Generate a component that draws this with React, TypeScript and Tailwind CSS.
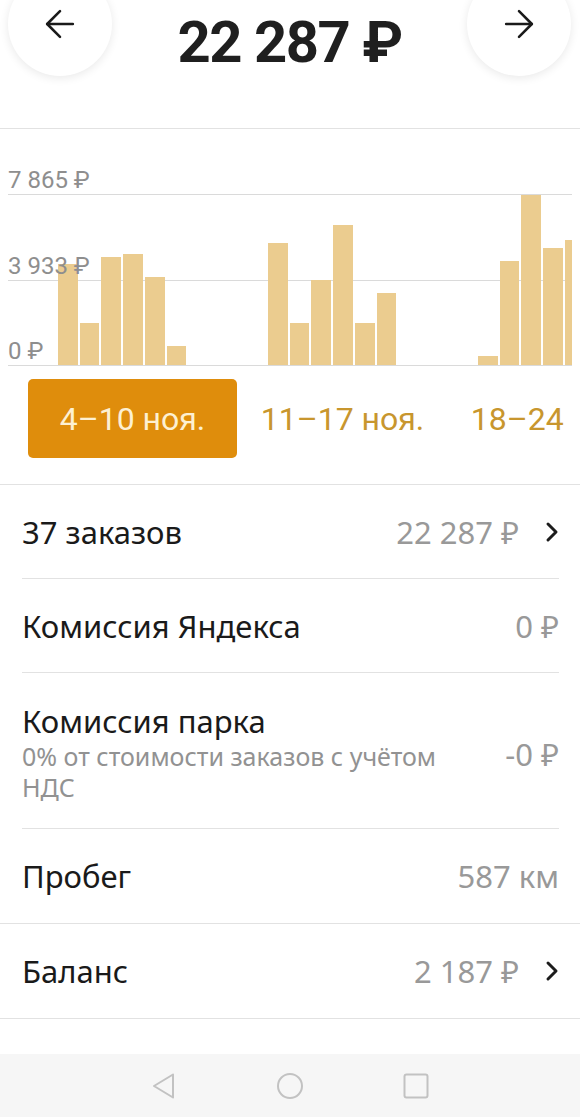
import { ArrowLeft, ArrowRight } from "lucide-react"

const MAX = 7865
const CHART_H = 171

const WEEKS: { label: string; values: number[] }[] = [
  { label: "4–10 ноя.", values: [4645, 1932, 4967, 5105, 4047, 874, 0] },
  { label: "11–17 ноя.", values: [5611, 1932, 3909, 6439, 1932, 3311, 0] },
  { label: "18–24 ноя.", values: [414, 4783, 7819, 5381, 5749, 0, 0] },
]

const GRID = ["7 865 ₽", "3 933 ₽", "0 ₽"]

function Chevron() {
  return (
    <svg width="14" height="22" viewBox="0 0 14 22" fill="none" className="shrink-0">
      <polyline
        points="3,3 11,11 3,19"
        stroke="#1c1c1c"
        strokeWidth="3"
        strokeLinecap="round"
        strokeLinejoin="round"
      />
    </svg>
  )
}

function CircleButton({ dir }: { dir: "left" | "right" }) {
  return (
    <button
      type="button"
      className="-mt-[28px] flex h-[104px] w-[104px] shrink-0 items-center justify-center rounded-full bg-white shadow-[0_2px_10px_rgba(0,0,0,0.09)]"
    >
      {dir === "left" ? (
        <ArrowLeft size={44} strokeWidth={1.4} color="#1a1a1a" />
      ) : (
        <ArrowRight size={44} strokeWidth={1.4} color="#1a1a1a" />
      )}
    </button>
  )
}

function Row({
  title,
  value,
  chevron,
  className,
}: {
  title: string
  value: string
  chevron?: boolean
  className: string
}) {
  return (
    <div className={`flex items-center justify-between ${className}`}>
      <span className="text-[31px] leading-[34px] text-[#1a1a1a]">{title}</span>
      <span className="flex items-center gap-[26px]">
        <span className="text-[31px] leading-[34px] text-[#999999]">{value}</span>
        {chevron && <Chevron />}
      </span>
    </div>
  )
}

export default function App() {
  return (
    <div className="relative h-[1117px] w-[580px] overflow-hidden bg-white font-['Noto_Sans','Roboto',sans-serif]">
      <header className="flex h-[129px] items-start justify-between border-b border-[#e2e2e2] pl-[8px] pr-[9px]">
        <CircleButton dir="left" />
        <h1 className="mt-[13px] flex-1 text-center font-['Roboto',sans-serif] text-[58px] font-bold leading-none tracking-[-1.5px] text-[#1f1f1f]">
          22 287 ₽
        </h1>
        <CircleButton dir="right" />
      </header>

      <section className="border-b border-[#e2e2e2]">
        <div className="mx-[8px] overflow-hidden pb-[26px] pt-[65px] font-['Roboto',sans-serif]">
          <div className="relative h-[172px]">
            <div className="absolute inset-0 flex flex-col justify-between">
              {GRID.map((g) => (
                <div key={g} className="h-px bg-[#dadada]" />
              ))}
            </div>
            <div className="relative z-10 flex h-[171px] items-end pl-[20px]">
              {WEEKS.map((w) => (
                <div
                  key={w.label}
                  className="grid h-full w-[210px] shrink-0 grid-cols-7 items-end gap-[2px] px-[30px]"
                >
                  {w.values.map((v, i) => (
                    <div
                      key={i}
                      className="bg-[#ebcc8f]"
                      style={{ height: Math.round((v / MAX) * CHART_H) }}
                    />
                  ))}
                </div>
              ))}
            </div>
            <div className="absolute inset-0 z-20 flex flex-col justify-between">
              {GRID.map((g) => (
                <div key={g} className="relative h-px">
                  <span className="absolute bottom-[3px] left-0 whitespace-nowrap text-[24px] leading-none text-[#8e8e8e]">
                    {g}
                  </span>
                </div>
              ))}
            </div>
          </div>

          <div className="mt-[13px] flex pl-[20px]">
            {WEEKS.map((w, i) => (
              <div key={w.label} className="w-[210px] shrink-0">
                <div
                  className={`flex h-[79px] w-[209px] items-center justify-center whitespace-nowrap rounded-[5px] text-[32px] ${
                    i === 0 ? "bg-[#df8d0c] text-[#fdf0d2]" : "text-[#c8962e]"
                  }`}
                >
                  {w.label}
                </div>
              </div>
            ))}
          </div>
        </div>
      </section>

      <div className="ml-[22px] mr-[21px]">
        <Row
          title="37 заказов"
          value="22 287 ₽"
          chevron
          className="h-[94px] border-b border-[#e2e2e2]"
        />
        <Row
          title="Комиссия Яндекса"
          value="0 ₽"
          className="h-[94px] border-b border-[#e2e2e2]"
        />
        <div className="flex items-center justify-between gap-[48px] border-b border-[#e2e2e2] pb-[25px] pt-[31px]">
          <div className="flex flex-col">
            <span className="text-[31px] leading-[34px] text-[#1a1a1a]">Комиссия парка</span>
            <span className="mt-[3px] text-[25px] leading-[31px] text-[#929292]">
              0% от стоимости заказов с учётом НДС
            </span>
          </div>
          <span className="shrink-0 text-[31px] leading-[34px] text-[#999999]">-0 ₽</span>
        </div>
      </div>

      <div className="border-b border-[#e2e2e2] pl-[22px] pr-[21px]">
        <Row title="Пробег" value="587 км" className="h-[94px]" />
      </div>
      <div className="border-b border-[#e2e2e2] pl-[22px] pr-[21px]">
        <Row title="Баланс" value="2 187 ₽" chevron className="h-[94px]" />
      </div>
      <div className="pl-[22px] pr-[21px]">
        <Row title="Начисления за неделю" value="" className="h-[94px]" />
      </div>

      <nav className="absolute bottom-0 left-0 right-0 flex h-[63px] items-center justify-center gap-[100px] bg-[#f6f6f6]">
        <svg width="26" height="26" viewBox="0 0 26 26" fill="none">
          <path d="M22 1.5 L3 13 L22 24.5 Z" stroke="#c2c2c2" strokeWidth="2" strokeLinejoin="round" />
        </svg>
        <svg width="26" height="26" viewBox="0 0 26 26" fill="none">
          <circle cx="13" cy="13" r="12" stroke="#c2c2c2" strokeWidth="2" />
        </svg>
        <svg width="26" height="26" viewBox="0 0 26 26" fill="none">
          <rect x="1.5" y="1.5" width="23" height="23" rx="2" stroke="#c2c2c2" strokeWidth="2" />
        </svg>
      </nav>
    </div>
  )
}
